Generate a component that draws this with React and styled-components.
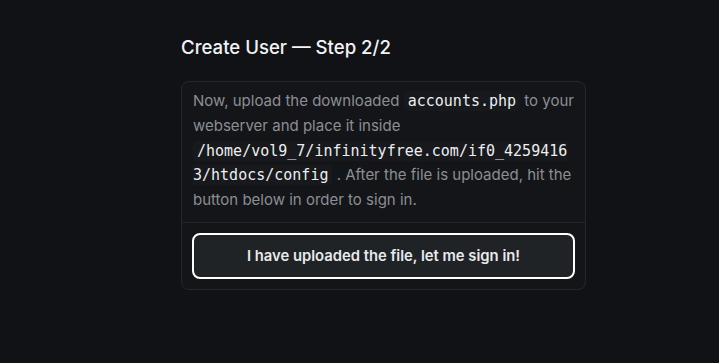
import React from "react";
import styled, { createGlobalStyle } from "styled-components";

const GlobalStyle = createGlobalStyle`
  html, body {
    margin: 0;
    background: #111215;
  }
  body {
    font-family: Inter, "Noto Sans", sans-serif;
  }
`;

const Page = styled.div`
  min-height: 363px;
  padding: 33px 0 0 181px;
  box-sizing: border-box;
`;

const Column = styled.div`
  width: 405px;
`;

const Title = styled.h1`
  margin: 0 0 20px;
  font-size: 18.6px;
  font-weight: 500;
  line-height: 28px;
  color: #f2f3f5;
`;

const Card = styled.div`
  background: #141518;
  border: 1px solid #26282c;
  border-radius: 8px;
  overflow: hidden;
`;

const Body = styled.p`
  margin: 0;
  padding: 7px 11px 9px;
  font-size: 15px;
  line-height: 24.75px;
  color: #8b8e94;
  border-bottom: 1px solid #232529;
`;

const Code = styled.code`
  font-family: "DejaVu Sans Mono", "Liberation Mono", monospace;
  font-size: 15px;
  color: #eceef1;
  background: #17191c;
  padding: 1px 4px;
  border-radius: 4px;
  overflow-wrap: anywhere;
`;

const Footer = styled.div`
  padding: 10px;
`;

const Button = styled.button`
  display: block;
  width: 100%;
  height: 46px;
  background: #202326;
  border: 2px solid #ffffff;
  border-radius: 8px;
  color: #e9eaec;
  font-family: Inter, "Noto Sans", sans-serif;
  font-size: 14.8px;
  font-weight: 600;
  cursor: pointer;
`;

export default function App() {
  return (
    <>
      <GlobalStyle />
      <Page>
        <Column>
          <Title>Create User — Step 2/2</Title>
          <Card>
            <Body>
              Now, upload the downloaded <Code>accounts.php</Code> to your
              webserver and place it inside{" "}
              <Code>/home/vol9_7/infinityfree.com/if0_42594163/htdocs/config</Code>{" "}
              . After the file is uploaded, hit the button below in order to
              sign in.
            </Body>
            <Footer>
              <Button>I have uploaded the file, let me sign in!</Button>
            </Footer>
          </Card>
        </Column>
      </Page>
    </>
  );
}
